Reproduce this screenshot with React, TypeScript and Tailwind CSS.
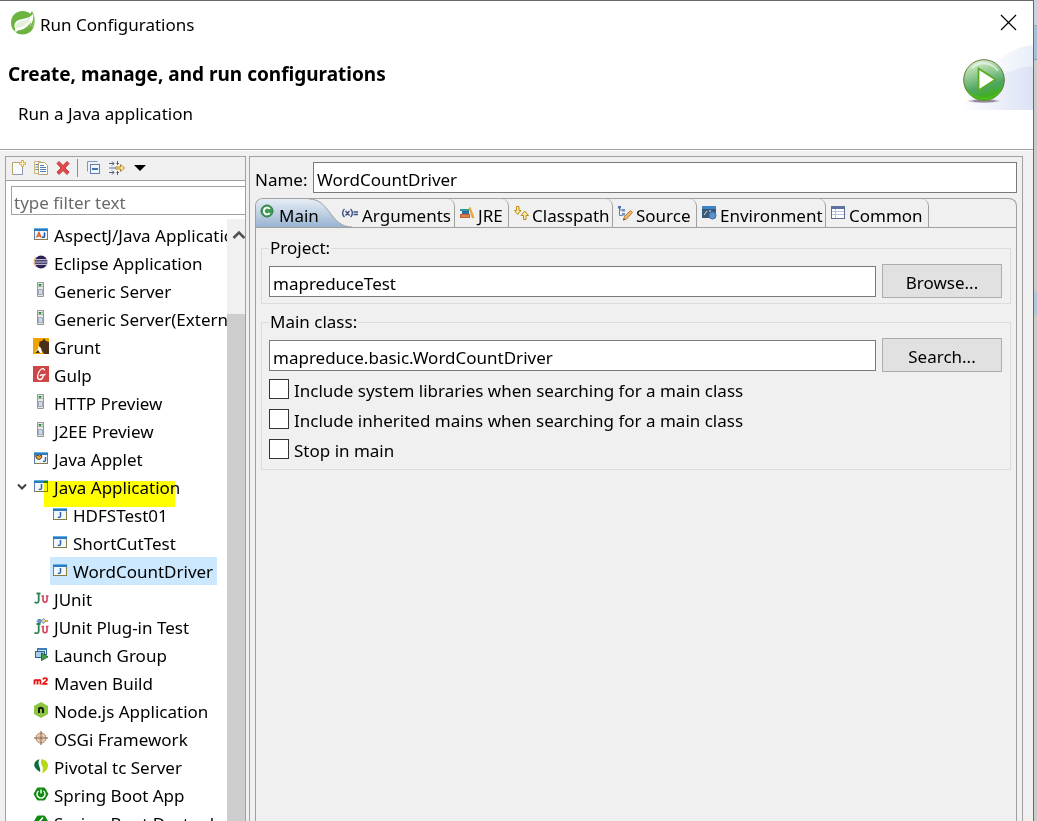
import { useState, type ReactNode } from "react";

/* ---------- Icons ---------- */

type IconProps = { children: ReactNode; size?: number };

function Icon({ children, size = 16 }: IconProps) {
  return (
    <svg width={size} height={size} viewBox="0 0 16 16" className="shrink-0" aria-hidden="true">
      {children}
    </svg>
  );
}

function SpringLogo() {
  return (
    <svg width="26" height="26" viewBox="0 0 26 26" className="shrink-0" aria-hidden="true">
      <path d="M22 1c2 3.500 3 7.500 2.500 12C24 20 19 24.500 12.500 24.500 6 24.500 1 19.300 1 12.700 1 6 6 1 12.500 1c3.200 0 5.800 1 7.800 2.800z" fill="#6db33f" />
      <path d="M23 3.500c-2 3.500-5.500 4.500-9.500 5.200C7.500 9.800 4 12 4.500 16.500c.3 2 1.500 3.500 3 4.500 5 .5 9.500-1 12.500-5 2.500-3.500 4-8 3-12.500z" fill="#fff" />
      <path d="M21 5.500c-2.500 4-6.500 4.500-10 5.500-4 1.200-5.500 3.500-5 7 8-.5 13-4 15-12.500z" fill="#e3f1db" />
      <path d="M7.500 20.500c5.500-.5 10.500-3 13.500-9-.5 6-5 11-12 11z" fill="#6db33f" />
      <circle cx="6" cy="20.500" r="1.300" fill="#fff" />
      <path d="M23 3.500c1.800 5 1.500 10-1 13.500" stroke="#a8d08b" strokeWidth="1" fill="none" />
    </svg>
  );
}

function RunBanner() {
  return (
    <svg width="73" height="67" viewBox="0 1 73 67" aria-hidden="true">
      <defs>
        <linearGradient id="swoosh" x1="0" x2="1">
          <stop offset="0" stopColor="#fff" />
          <stop offset="1" stopColor="#dbe2f5" />
        </linearGradient>
        <linearGradient id="swooshTop" x1="0" x2="1">
          <stop offset="0.3" stopColor="#fff" />
          <stop offset="1" stopColor="#e8edf8" />
        </linearGradient>
        <linearGradient id="ball" x1="0" y1="0" x2="0.3" y2="1">
          <stop offset="0" stopColor="#f4faef" />
          <stop offset="0.35" stopColor="#a5d3a0" />
          <stop offset="0.75" stopColor="#4fa665" />
          <stop offset="1" stopColor="#3fae1c" />
        </linearGradient>
        <radialGradient id="ballShadow">
          <stop offset="0.5" stopColor="#8f8a96" />
          <stop offset="1" stopColor="#fff" stopOpacity="0" />
        </radialGradient>
      </defs>
      <path d="M0 67C20 34 42 4 74 2v65z" fill="url(#swooshTop)" />
      <path d="M0 67C22 40 46 25 74 23v44z" fill="url(#swoosh)" />
      <ellipse cx="24" cy="58" rx="20" ry="2.500" fill="url(#ballShadow)" />
      <circle cx="24" cy="37" r="20.300" fill="url(#ball)" stroke="#5f7a35" strokeWidth="1" />
      <path d="M5.500 42a18.800 18.800 0 0 0 37 0c-4 9-11 12-18.500 12S9 51 5.500 42z" fill="#48bd17" opacity="0.900" />
      <path d="M12 25a17 17 0 0 1 26 3" stroke="#fff" strokeWidth="2" opacity="0.500" fill="none" />
      <path d="M18.500 25.500v22L35.500 36.500z" fill="#fff" stroke="#58ad25" strokeWidth="1.800" />
    </svg>
  );
}

function WindowFrame({ children }: { children?: ReactNode }) {
  return (
    <Icon>
      <rect x="1.500" y="2.500" width="13" height="11" fill="#f1f7fd" stroke="#8a7b45" />
      <path d="M1.500 13.500v-11h13" fill="none" stroke="#5b7fa8" />
      <rect x="1" y="2" width="14" height="3" fill="#2a7bc0" />
      <rect x="1" y="2" width="14" height="1" fill="#63b0e6" />
      {children}
    </Icon>
  );
}

const JavaAppIcon = () => (
  <WindowFrame>
    <path d="M8.500 6v4c0 1.500-1.500 1.800-2.700 1.200" fill="none" stroke="#2f66a8" strokeWidth="1.500" />
  </WindowFrame>
);
const AspectIcon = () => (
  <WindowFrame>
    <path d="M3.500 11.500L6 6.500l2 5M4.500 10h3" fill="none" stroke="#e0622a" strokeWidth="1.400" />
    <path d="M11.500 6.500v3.500c0 1.300-1 1.600-2.500 1" fill="none" stroke="#2150a5" strokeWidth="1.500" />
  </WindowFrame>
);
const AppletIcon = () => (
  <WindowFrame>
    <path d="M2.500 5.500l1.500.5 1-1 1.500 1 1.500-1 1 1-1 2.500-2 1L3.500 8.500z" fill="#e8a33c" stroke="#5c4220" />
    <path d="M12.500 7v3c0 1.500-1.200 1.800-2.500 1.200" fill="none" stroke="#2f66a8" strokeWidth="1.400" />
  </WindowFrame>
);
const EclipseIcon = () => (
  <Icon>
    <circle cx="8" cy="8" r="6.500" fill="#2c2255" />
    <path d="M1 5.700h14M1 8h14M1 10.300h14" stroke="#dfe0ee" strokeWidth="1" />
    <path d="M3 3a7 7 0 0 0 0 10" stroke="#f0a13a" strokeWidth="0.800" fill="none" />
  </Icon>
);
const ServerIcon = () => (
  <Icon>
    <path d="M4.500 .5h6v14h-6z" fill="#e6eae4" stroke="#8f9c8a" />
    <path d="M5 2.500h5M5 4.500h5" stroke="#a9b3a5" />
    <rect x="6" y="2" width="2" height="2" fill="#1f9c2e" />
    <path d="M5.500 7.500h4v5h-4z" fill="#cfd8ee" stroke="#a2aaba" />
  </Icon>
);
const GruntIcon = () => (
  <Icon>
    <rect width="16" height="16" fill="#f0a500" />
    <path d="M6.500 3.500L9 3l2-2.500L13 3l3 1v12h-5L8.500 12 6 8z" fill="#4a2f19" />
    <path d="M2 14l3-3 .5-3L8 10l1 5H2z" fill="#fff" />
    <path d="M2 15l3-3 2 3z" fill="#4a2f19" />
  </Icon>
);
const GulpIcon = () => (
  <Icon>
    <rect width="16" height="16" fill="#cf4646" />
    <path d="M11.500 4.500C11.500 2 8.500 2 6.500 5s-3 8 0 8.500c2 .2 3.500-2 4-4.500-1.500-.5-3 0-3.500 1M10.500 9c1 0 1.500-.5 2-1" fill="none" stroke="#fff" strokeWidth="1.300" />
  </Icon>
);
const JUnitGlyph = ({ y }: { y: number }) => (
  <>
    <path d={`M3.500 ${y - 9.500}h4M5.700 ${y - 9}v6.500c0 2.500-2.500 3-4 1.500`} fill="none" stroke="#2b8551" strokeWidth="1.800" />
    <path d={`M8.500 ${y - 7}h2.500M13 ${y - 7}h2.500M10 ${y - 7}v4c0 3 4 3 4 0v-4`} fill="none" stroke="#d2405a" strokeWidth="1.600" />
  </>
);
const JUnitIcon = () => (
  <Icon>
    <JUnitGlyph y={13} />
  </Icon>
);
const JUnitPluginIcon = () => (
  <Icon>
    <JUnitGlyph y={15.5} />
    <path d="M3.500 3h4M5 1.500h3v3H5z" stroke="#5b82b8" fill="#9ab6dc" />
    <path d="M10.500 .5L13 3l-2.500 2.500L8.500 3z" fill="#f4d98a" stroke="#7a8fb0" />
    <path d="M13 3h2" stroke="#c28a2b" strokeWidth="1.500" />
  </Icon>
);
const LaunchGroupIcon = () => (
  <Icon>
    <rect x="4.500" y="2.500" width="9" height="6" fill="#d6e8f8" stroke="#3a6ea5" />
    <rect x="4" y="2" width="10" height="2" fill="#3f7cb5" />
    <rect x="2.500" y="5.500" width="9" height="6" fill="#a8cbe8" stroke="#2f6190" />
    <path d="M8.500 7v7.500L15 10.800z" fill="#43a047" stroke="#256b36" />
  </Icon>
);
const MavenIcon = () => (
  <Icon>
    <path d="M1.500 10.500V5.500M1.500 7C2 5.500 4.500 5.500 4.500 7v3.500M4.500 7C5 5.500 7.500 5.500 7.500 7v3.500M10 5.500c.5-1.800 4-1.800 4 .2 0 1.300-3 2.300-4 4.200h4.500" fill="none" stroke="#e81313" strokeWidth="1.800" />
  </Icon>
);
const NodeIcon = () => (
  <Icon>
    <path d="M8 0l7 4v8l-7 4-7-4V4z" fill="#8cc63e" />
    <path d="M6 11V5.500M6 7c.5-1.500 4-1.800 4 .5V11" fill="none" stroke="#111" strokeWidth="1.900" />
  </Icon>
);
const OsgiIcon = () => (
  <Icon>
    <circle cx="8" cy="8" r="5" fill="#efd7bd" stroke="#a98466" />
    <path d="M8 1v14M1 8h14" stroke="#7d5a43" />
    <circle cx="8" cy="8" r="2.500" fill="none" stroke="#c6a385" />
  </Icon>
);
const PivotalIcon = () => (
  <Icon>
    <path d="M6.500 1C2 2.500 0 6.500 2 9.500c1.500 2.500 3.500 3 5 4.500 1-4-1.500-6-1.500-9 0-1.500.5-3 1-4z" fill="#0c6b3d" />
    <path d="M8.500 1c4 1 6.500 3 6.500 6.500S12.500 14 9 15c1.500-4 1-5.500 0-7.500C7.500 5 7.800 3 8.500 1z" fill="#b6d91a" />
  </Icon>
);
const Hexagon = () => <path d="M4.500 2h7L15 8l-3.500 6h-7L1 8z" fill="#108a10" stroke="#108a10" strokeLinejoin="round" />;
const BootIcon = () => (
  <Icon>
    <Hexagon />
    <path d="M5.500 5a4 4 0 1 0 5 0M8 3.500v4" fill="none" stroke="#fff" strokeWidth="1.400" />
  </Icon>
);
const DevtoolsIcon = () => (
  <Icon>
    <Hexagon />
    <path d="M10 3.500L6 8h3.500L6.500 12.500" fill="none" stroke="#fff" strokeWidth="1.500" />
  </Icon>
);

const ClassIcon = () => (
  <Icon>
    <circle cx="8" cy="8" r="6" fill="#3f9a55" stroke="#2c7c42" />
    <path d="M10.800 5.800a3.400 3.400 0 1 0 0 4.400" fill="none" stroke="#fff" strokeWidth="1.900" />
  </Icon>
);
const ArgsIcon = () => (
  <svg width="18" height="16" viewBox="0 0 18 16" className="shrink-0" aria-hidden="true">
    <path d="M3.500 4C1 6 1 10 3.500 12M9.500 4c2.500 2 2.500 6 0 8M4.500 6l4 4.500M8.500 6l-4 4.500M12.500 7H17M12.500 9.500H17" fill="none" stroke="#3d5080" strokeWidth="1.400" />
  </svg>
);
const JreIcon = () => (
  <Icon>
    <rect x="1" y="4" width="9" height="2" fill="#2b9a9a" />
    <rect x="3" y="6" width="7" height="3" fill="#2c6da8" />
    <rect x="1" y="9" width="10" height="4" fill="#c4622f" />
    <path d="M2 11h8" stroke="#e8a070" />
    <path d="M9.500 3l2-1 4 10.500-2.500 1z" fill="#eda63a" />
  </Icon>
);
const ClasspathIcon = () => (
  <Icon>
    <path d="M3.500 1.500h2.500v4h2L4.700 9.500 1.500 5.500h2z" fill="#fbe9a8" stroke="#bf8d1b" />
    <path d="M10.500 14.500h2.500v-4h2.500l-3.700-4.500L8 10.500h2.500z" fill="#fbe9a8" stroke="#bf8d1b" />
  </Icon>
);
const SourceIcon = () => (
  <Icon>
    <path d="M2.500 2v8.500h3M2.500 5h3" fill="none" stroke="#5c7fb8" />
    <rect x="1" y="1" width="3" height="2.500" fill="#4a72b0" />
    <rect x="5" y="4" width="3" height="2.500" fill="#6f93c9" />
    <rect x="5" y="8" width="3" height="2.500" fill="#6f93c9" />
    <path d="M6.500 15l1-3.500 6-6 2 2-6 6.500z" fill="#f0b768" stroke="#b97b35" />
    <path d="M6 15.500l.8-2 1.200 1z" fill="#333" />
  </Icon>
);
const EnvironmentIcon = () => (
  <Icon>
    <rect x="1" y="1" width="14" height="12" fill="#3c5878" />
    <rect x="1" y="1" width="14" height="3" fill="#3d86c6" />
    <path d="M3 10l3-4M8 6l2 0" stroke="#dce6f0" />
    <circle cx="11.500" cy="10.500" r="3.500" fill="#5b92cc" stroke="#3f6fa8" />
  </Icon>
);
const CommonIcon = () => (
  <Icon>
    <rect x="1.500" y="1.500" width="13" height="12" fill="#fff" stroke="#5c6d94" />
    <rect x="1" y="1" width="14" height="3" fill="#5e729f" />
    <path d="M2 6.500h12M2 9.500h12M5.500 4v9" stroke="#b9c4da" />
  </Icon>
);

const NewIcon = () => (
  <Icon>
    <path d="M1.500 2.500h7l3 3v9h-10z" fill="#f8fbff" stroke="#b9a36a" />
    <path d="M2 14.500h9.500V8" fill="none" stroke="#8d9cb5" />
    <path d="M11.500 0v7M8 3.500h7" stroke="#d8a93a" strokeWidth="2.600" />
    <path d="M11.500 1v5M9 3.500h5" stroke="#fdf3c4" strokeWidth="1" />
  </Icon>
);
const DuplicateIcon = () => (
  <Icon>
    <path d="M1.500 1.500h6l2 2v10h-8z" fill="#fbf7e6" stroke="#c9b586" />
    <path d="M5.500 2.500h6l3 3v9h-9z" fill="#fff" stroke="#b5a377" />
    <path d="M2.500 4.500H5M2.500 7H5M2.500 9.500H5M7 5.500h4M7 7.500h6M7 9.500h6M7 11.500h6" stroke="#4a82bd" />
  </Icon>
);
const DeleteIcon = () => (
  <Icon>
    <path d="M2 3.500L4 1.500l4 4 4-4 2 2-4 4.500 4 4-2 2.500-4-4-4 4-2-2.500 4-4z" fill="#e14a48" stroke="#c23a3c" />
  </Icon>
);
const CollapseIcon = () => (
  <Icon>
    <path d="M1.500 11.500v-10h10" fill="none" stroke="#7d98c0" />
    <rect x="4.500" y="4.500" width="9" height="9" fill="#eef6fd" stroke="#5f7fae" />
    <path d="M6 9h6" stroke="#1d4f94" strokeWidth="1.600" />
  </Icon>
);
const FilterIcon = () => (
  <svg width="18" height="16" viewBox="0 0 18 16" className="shrink-0" aria-hidden="true">
    <path d="M1 3.500h5M4 1.500l2 2-2 2M1 12.500h5M4 10.500l2 2-2 2" fill="none" stroke="#4c6378" />
    <path d="M8.500 3.500h2.500M8.500 12.500h2.500M9.500 1v4M9.500 11v4" stroke="#4c6378" />
    <path d="M1 8h6" stroke="#5c7488" />
    <path d="M7.500 7h5V4.500L16.500 8l-4 3.500V9h-5z" fill="#fbe7a8" stroke="#b98324" />
  </svg>
);

/* ---------- Left side ---------- */

type TreeItem = { label: string; icon: () => ReactNode; child?: boolean; open?: boolean; marked?: boolean };

const ITEMS: TreeItem[] = [
  { label: "AspectJ/Java Application", icon: AspectIcon },
  { label: "Eclipse Application", icon: EclipseIcon },
  { label: "Generic Server", icon: ServerIcon },
  { label: "Generic Server(External Launch)", icon: ServerIcon },
  { label: "Grunt", icon: GruntIcon },
  { label: "Gulp", icon: GulpIcon },
  { label: "HTTP Preview", icon: ServerIcon },
  { label: "J2EE Preview", icon: ServerIcon },
  { label: "Java Applet", icon: AppletIcon },
  { label: "Java Application", icon: JavaAppIcon, open: true, marked: true },
  { label: "HDFSTest01", icon: JavaAppIcon, child: true },
  { label: "ShortCutTest", icon: JavaAppIcon, child: true },
  { label: "WordCountDriver", icon: JavaAppIcon, child: true },
  { label: "JUnit", icon: JUnitIcon },
  { label: "JUnit Plug-in Test", icon: JUnitPluginIcon },
  { label: "Launch Group", icon: LaunchGroupIcon },
  { label: "Maven Build", icon: MavenIcon },
  { label: "Node.js Application", icon: NodeIcon },
  { label: "OSGi Framework", icon: OsgiIcon },
  { label: "Pivotal tc Server", icon: PivotalIcon },
  { label: "Spring Boot App", icon: BootIcon },
  { label: "Spring Boot Devtools Client", icon: DevtoolsIcon },
];

function TreeRow({ item, selected, onSelect }: { item: TreeItem; selected: boolean; onSelect: () => void }) {
  const Glyph = item.icon;
  return (
    <li role="treeitem" aria-selected={selected} className={`relative flex h-7 items-center ${item.child ? "pl-11" : "pl-1.5"}`}>
      {!item.child && (
        <span className="flex w-[19px] shrink-0 justify-center">
          {item.open && (
            <svg width="10" height="8" viewBox="0 0 10 8" aria-hidden="true">
              <path d="M1 1.500l4 4 4-4" fill="none" stroke="#404040" strokeWidth="2" />
            </svg>
          )}
        </span>
      )}
      <button
        type="button"
        onClick={onSelect}
        className={`flex h-7 items-center gap-[5px] pl-0.5 whitespace-nowrap ${item.child ? "pr-1" : ""} ${selected ? "bg-[#cce8ff]" : ""}`}
      >
        <span className="pb-0.5">
          <Glyph />
        </span>
        <span className="pt-0.5">{item.label}</span>
      </button>
      {item.marked && <span className="absolute top-2 left-[38px] h-[26px] w-[131px] bg-[#ffff00] mix-blend-multiply" />}
    </li>
  );
}

function Sidebar() {
  const [selected, setSelected] = useState("WordCountDriver");
  return (
    <aside className="flex w-[241px] shrink-0 flex-col overflow-hidden border border-b-0 border-[#a0a0a0] bg-white">
      <div className="flex h-6 shrink-0 items-center gap-1.5 border-b border-[#a0a0a0] bg-[#f0f0f0] pb-px pl-[5px]">
        <button type="button" aria-label="New launch configuration"><NewIcon /></button>
        <button type="button" aria-label="Duplicate"><DuplicateIcon /></button>
        <button type="button" aria-label="Delete"><DeleteIcon /></button>
        <span className="h-[18px] w-px bg-[#8d8d8d]" />
        <button type="button" aria-label="Collapse all" className="pl-0.5"><CollapseIcon /></button>
        <button type="button" aria-label="Filter"><FilterIcon /></button>
        <button type="button" aria-label="Filter menu" className="pl-0.5">
          <svg width="12" height="6" viewBox="0 0 12 6" aria-hidden="true"><path d="M0 0h12L6 6z" fill="#000" /></svg>
        </button>
      </div>
      <div className="shrink-0 pt-[5px] pb-1 pl-[5px]">
        <input
          type="text"
          aria-label="Filter"
          placeholder="type filter text"
          className="block h-[29px] w-full border border-r-0 border-[#a0a0a8] bg-white pt-1 pl-0.5 outline-none placeholder:text-[#6a6a6a]"
        />
      </div>
      <div className="flex min-h-0 flex-1 overflow-hidden">
        <ul role="tree" aria-label="Launch configurations" className="min-w-0 flex-1 overflow-hidden pt-0.5">
          {ITEMS.map((item) => (
            <TreeRow key={item.label} item={item} selected={selected === item.label} onSelect={() => setSelected(item.label)} />
          ))}
        </ul>
        <div className="flex w-[18px] shrink-0 flex-col overflow-hidden bg-[#f0f0f0]">
          <div className="flex h-[95px] shrink-0 justify-center pt-[11px] pl-1.5">
            <svg width="14" height="10" viewBox="0 0 14 10" className="shrink-0" aria-hidden="true">
              <path d="M1.500 8L7 2.500 12.500 8" fill="none" stroke="#505050" strokeWidth="2.500" />
            </svg>
          </div>
          <div className="flex-1 bg-[#cdcdcd]" />
        </div>
      </div>
    </aside>
  );
}

/* ---------- Right side ---------- */

const TABS = [
  { label: "Arguments", icon: ArgsIcon, width: "w-[118px]" },
  { label: "JRE", icon: JreIcon, width: "w-[54px]" },
  { label: "Classpath", icon: ClasspathIcon, width: "w-[104px]" },
  { label: "Source", icon: SourceIcon, width: "w-[84px]" },
  { label: "Environment", icon: EnvironmentIcon, width: "w-[129px]" },
  { label: "Common", icon: CommonIcon, width: "w-[103px]" },
];

function TabBar() {
  return (
    <div role="tablist" className="flex h-[29px] border-b border-[#a0a0a0]">
      <button type="button" role="tab" aria-selected="true" className="relative flex w-[81px] shrink-0 items-center gap-1 pl-[3px]">
        <svg width="97" height="28" viewBox="0 0 97 28" className="absolute top-0 left-0" aria-hidden="true">
          <defs>
            <linearGradient id="activeTab" x1="0" y1="0" x2="0" y2="1">
              <stop offset="0" stopColor="#e6edf5" />
              <stop offset="1" stopColor="#99b4d1" />
            </linearGradient>
          </defs>
          <path d="M0 28V7C0 3 3 0 7 0h47C74 0 74 28 96 28z" fill="url(#activeTab)" />
          <path d="M53 0C74 0 74 28 96 28" fill="none" stroke="#a0a0a0" />
        </svg>
        <span className="relative pb-1"><ClassIcon /></span>
        <span className="relative pt-1.5">Main</span>
      </button>
      {TABS.map(({ label, icon: Glyph, width }) => (
        <button
          key={label}
          type="button"
          role="tab"
          aria-selected="false"
          className={`flex shrink-0 items-center gap-[3px] rounded-tr-[7px] border-r border-[#a0a0a0] pl-1 whitespace-nowrap ${width}`}
        >
          <span className="relative"><Glyph /></span>
          <span className="relative pt-1.5">{label}</span>
        </button>
      ))}
    </div>
  );
}

function Group({ title, children }: { title: string; children: ReactNode }) {
  return (
    <fieldset className="border border-[#dcdcdc] px-[7px] pb-[5px]">
      <legend className="px-px leading-5">{title}</legend>
      {children}
    </fieldset>
  );
}

function PickerRow({ label, value, action }: { label: string; value: string; action: string }) {
  return (
    <div className="flex items-center gap-1.5 pt-1.5 pr-px">
      <input
        type="text"
        aria-label={label}
        defaultValue={value}
        className="h-[31px] min-w-0 flex-1 border border-[#7a7a7a] bg-white px-[3px] pt-1 outline-none"
      />
      <button type="button" className="h-[34px] w-[120px] border border-[#adadad] bg-[#e1e1e1] pt-1">
        {action}
      </button>
    </div>
  );
}

function CheckRow({ label }: { label: string }) {
  return (
    <label className="flex h-[30px] items-center gap-[5px]">
      <input type="checkbox" className="size-5 shrink-0 appearance-none border border-[#333333] bg-white checked:bg-[#333333]" />
      <span className="pt-1">{label}</span>
    </label>
  );
}

function Editor() {
  return (
    <main className="flex min-w-0 flex-1 flex-col border border-b-0 border-[#a0a0a0] px-[5px] pt-[5px]">
      <div className="flex items-center gap-1">
        <label htmlFor="config-name" className="w-[54px] shrink-0 pt-1">Name:</label>
        <input
          id="config-name"
          type="text"
          defaultValue="WordCountDriver"
          className="h-[31px] min-w-0 flex-1 border border-[#7a7a7a] bg-white px-[3px] pt-1 outline-none"
        />
      </div>
      <section className="mt-[5px] flex flex-1 flex-col rounded-t-lg border border-b-0 border-[#a0a0a0]">
        <TabBar />
        <div role="tabpanel" className="flex flex-col gap-2 px-[5px] pt-2.5">
          <Group title="Project:">
            <PickerRow label="Project" value="mapreduceTest" action="Browse..." />
          </Group>
          <Group title="Main class:">
            <PickerRow label="Main class" value="mapreduce.basic.WordCountDriver" action="Search..." />
            <div className="pt-0.5">
              <CheckRow label="Include system libraries when searching for a main class" />
              <CheckRow label="Include inherited mains when searching for a main class" />
              <CheckRow label="Stop in main" />
            </div>
          </Group>
        </div>
      </section>
    </main>
  );
}

/* ---------- Dialog ---------- */

export default function App() {
  return (
    <div className="flex h-screen overflow-hidden bg-[#cbcbcb] font-['Noto_Sans','Open_Sans',sans-serif] text-[17px] leading-6 text-black">
      <div className="flex min-w-0 flex-1 flex-col border-t border-r border-[#6a6a6e] bg-[#f0f0f0]">
        <header className="shrink-0 border-b border-[#a0a0a0] bg-white">
          <div className="flex h-[43px] items-center justify-between pr-4 pl-2.5">
            <div className="flex items-center gap-1">
              <SpringLogo />
              <span className="pt-1">Run Configurations</span>
            </div>
            <button type="button" aria-label="Close">
              <svg width="17" height="17" viewBox="0 0 17 17" aria-hidden="true">
                <path d="M1 1l15 15M16 1L1 16" stroke="#000" strokeWidth="1.200" />
              </svg>
            </button>
          </div>
          <div className="flex h-[105px] justify-between">
            <div className="pt-[18px] pl-2">
              <h1 className="text-[19px] font-bold">Create, manage, and run configurations</h1>
              <p className="pt-4 pl-2.5">Run a Java application</p>
            </div>
            <RunBanner />
          </div>
        </header>
        <div className="flex min-h-0 flex-1 gap-[3px] border-t border-white pt-[5px] pr-2.5 pl-[5px]">
          <Sidebar />
          <Editor />
        </div>
      </div>
      <div className="flex w-[3px] shrink-0 flex-col">
        <span className="h-[26px] border-b border-[#a8a8a8] bg-[#cdd1e0]" />
        <span className="h-[34px] border-b border-[#8aa0b8] bg-[#a9bfd6]" />
        <span className="h-[232px]" />
        <span className="h-[23px] bg-[#b7c4d8]" />
      </div>
    </div>
  );
}
